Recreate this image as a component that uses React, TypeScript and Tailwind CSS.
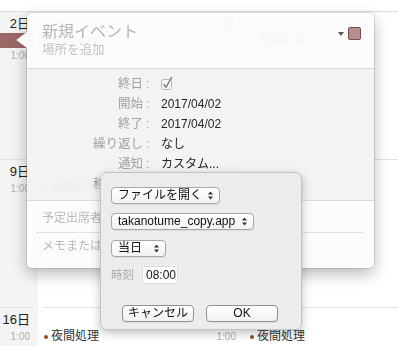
import clsx from "clsx";

const FONT = "font-['Liberation_Sans','Noto_Sans_CJK_JP',sans-serif]";

type Day = { date: string; gray?: boolean; pending?: boolean };

const weeks: Day[][] = [
  [{ date: "2日", gray: true, pending: true }, { date: "3日" }, { date: "4日" }],
  [{ date: "9日", gray: true }, { date: "10日" }, { date: "11日" }],
  [{ date: "16日", gray: true }, { date: "17日" }, { date: "18日" }],
];

function Event() {
  return (
    <div className="mx-[5px] flex h-[15px] items-center">
      <span className="ml-px size-[4px] rounded-full bg-[#9c4a12]" />
      <span className="ml-[3px] flex-1 text-[12px] leading-[15px] text-[#333]">夜間処理</span>
      <span className="mr-[3px] text-[10px] leading-[15px] text-[#b0b0b0]">1:00</span>
    </div>
  );
}

function DayCell({ day, first }: { day: Day; first: boolean }) {
  return (
    <div className={clsx("h-[148px]", day.gray ? "bg-[#f4f4f4]" : "bg-white")}>
      <div className={clsx("h-px", first ? "bg-[#dcdcdc]" : "mx-[5px] bg-[#e2e2e2]")} />
      <div className="h-[21px] pr-[8px] pt-[4px] text-right text-[13px] leading-[16px] text-[#222]">
        {day.date}
      </div>
      {day.pending && <div className="mx-[5px] h-[15px] bg-[#9a6767]" />}
      <Event />
    </div>
  );
}

function Field({ label, children }: { label: string; children: React.ReactNode }) {
  return (
    <div className="flex h-[20px] items-center">
      <span className="w-[116px] text-right text-[12.5px] leading-[16px] text-[#a2a2a2]">{label}</span>
      <span className="w-[18px] pl-[3px] text-[12px] leading-[16px] text-[#a2a2a2]">:</span>
      <span className="text-[12px] leading-[16px] text-[#262626]">{children}</span>
    </div>
  );
}

function Checkbox() {
  return (
    <svg width="13" height="14" viewBox="0 0 13 14" className="mt-[-2px]">
      <rect x="0.5" y="3.5" width="10" height="10" rx="2" fill="#f7f7f7" stroke="#b9b9b9" />
      <path d="M2.6 8.2 L5 11.2 L10.8 1.2" fill="none" stroke="#7f7f7f" strokeWidth="1.5" strokeLinejoin="round" />
    </svg>
  );
}

function UpDown() {
  return (
    <svg width="5" height="9" viewBox="0 0 5 9">
      <path d="M0 3.6 L2.5 0.4 L5 3.6 Z M0 5.4 L2.5 8.6 L5 5.4 Z" fill="#333" />
    </svg>
  );
}

function PopUp({ className, children }: { className: string; children: React.ReactNode }) {
  return (
    <div
      className={clsx(
        "flex h-[17px] items-center justify-between rounded-[4px] border border-[#a6a6a6] bg-gradient-to-b from-white to-[#f2f2f2] pl-[6px] pr-[6px] shadow-[0_1px_0_rgba(0,0,0,0.06)]",
        className
      )}
    >
      <span className="text-[12px] leading-[15px] text-[#111]">{children}</span>
      <UpDown />
    </div>
  );
}

function PushButton({ children }: { children: React.ReactNode }) {
  return (
    <div className="flex h-[17px] w-[72px] items-center justify-center rounded-[4px] border border-[#929292] bg-gradient-to-b from-white to-[#f1f1f1] text-[12px] leading-[15px] text-[#111] shadow-[0_1px_0_rgba(0,0,0,0.06)]">
      {children}
    </div>
  );
}

function EventPopover() {
  return (
    <div className="absolute left-[27px] top-[13px] w-[347px] rounded-[5px] shadow-[0_0_0_1px_rgba(0,0,0,0.1),0_6px_16px_rgba(0,0,0,0.28)]">
      <svg width="13" height="18" viewBox="0 0 13 18" className="absolute left-[-12px] top-[18px] z-10">
        <polygon points="13,0 1,9 13,18" fill="#fcfcfc" />
        <polyline points="13,0 1,9 13,18" fill="none" stroke="rgba(0,0,0,0.12)" />
      </svg>
      <div className="flex h-[56px] rounded-t-[5px] border-b border-[#d6d6d6] bg-[rgba(252,252,252,0.96)] pl-[15px] pr-[13px] pt-[9px] backdrop-blur-[1.5px]">
        <div className="flex-1">
          <div className="text-[16px] leading-[20px] text-[#b6b6b6]">新規イベント</div>
          <div className="text-[12.5px] leading-[16px] text-[#c2c2c2]">場所を追加</div>
        </div>
        <div className="flex items-center gap-[4px] self-start pt-[5px]">
          <svg width="6" height="4" viewBox="0 0 6 4">
            <path d="M0 0 H6 L3 4 Z" fill="#555" />
          </svg>
          <span className="size-[13px] rounded-[2px] border border-[#7b4b4b] bg-[#b58e8e]" />
        </div>
      </div>
      <div className="bg-[rgba(242,242,242,0.96)] pb-[6px] pt-[5px] backdrop-blur-[1.5px]">
        <Field label="終日">
          <Checkbox />
        </Field>
        <Field label="開始">2017/04/02</Field>
        <Field label="終了">2017/04/02</Field>
        <Field label="繰り返し">なし</Field>
        <Field label="通知">カスタム...</Field>
        <Field label="移動時間">なし</Field>
      </div>
      <div className="h-[68px] rounded-b-[5px] border-t border-[#d9d9d9] bg-[rgba(252,252,252,0.96)] pt-[9px] backdrop-blur-[1.5px]">
        <div className="pl-[15px] text-[12px] leading-[16px] text-[#b9b9b9]">予定出席者を追加</div>
        <div className="ml-[10px] mr-[11px] mt-[6px] border-t border-dotted border-[#c9c9c9]" />
        <div className="pl-[15px] pt-[5px] text-[12px] leading-[16px] text-[#b9b9b9]">メモまたはURLを追加</div>
      </div>
    </div>
  );
}

function ActionSheet() {
  return (
    <div className="absolute left-[100px] top-[172px] w-[202px] rounded-[7px] border border-[#c2c2c2] bg-[#ececec] pb-[7px] pl-[10px] pt-[14px] shadow-[0_3px_10px_rgba(0,0,0,0.25)]">
      <PopUp className="w-[109px]">ファイルを開く</PopUp>
      <PopUp className="mt-[9px] w-[143px]">takanotume_copy.app</PopUp>
      <PopUp className="mt-[10px] w-[55px]">当日</PopUp>
      <div className="mt-[9px] flex h-[18px] items-center">
        <span className="w-[31px] text-[11.5px] leading-[16px] text-[#a8a8a8]">時刻</span>
        <div className="flex h-[18px] w-[36px] items-center border border-[#dcdcdc] bg-white pl-[3px] text-[12px] leading-[16px] text-[#111]">
          08:00
        </div>
      </div>
      <div className="ml-[11px] mt-[21px] flex gap-[12px]">
        <PushButton>キャンセル</PushButton>
        <PushButton>OK</PushButton>
      </div>
    </div>
  );
}

export default function App() {
  return (
    <div className={clsx("relative h-[346px] w-[398px] overflow-hidden bg-white", FONT)}>
      <div className="ml-[-168px] w-[618px]">
        <div className="h-[11px]" />
        {weeks.map((week, i) => (
          <div key={i} className="grid grid-cols-[206px_206px_206px]">
            {week.map((day) => (
              <DayCell key={day.date} day={day} first={i === 0} />
            ))}
          </div>
        ))}
      </div>
      <EventPopover />
      <ActionSheet />
    </div>
  );
}
